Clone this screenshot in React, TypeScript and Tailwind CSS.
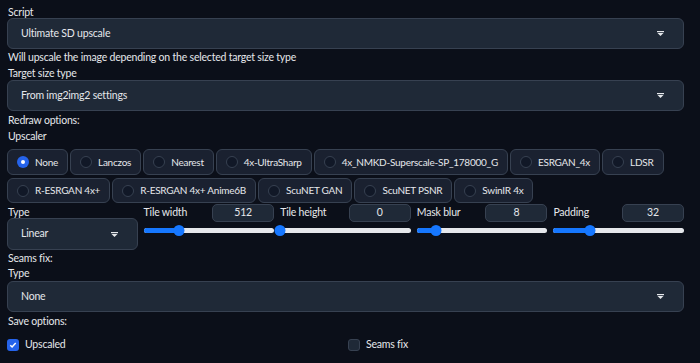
import React from 'react'

const Caret = () => (
  <svg width="7" height="5" viewBox="0 0 7 5" className="shrink-0">
    <path d="M0 0h7v1.2H0z" fill="#e5e7eb" />
    <path d="M0.5 2h6L3.5 5z" fill="#e5e7eb" />
  </svg>
)

function Dropdown({ value, className = 'h-[31px]' }: { value: string; className?: string }) {
  return (
    <div className={`flex items-center justify-between pl-[13px] pr-[19px] bg-[#1f2937] border border-[#374151] rounded-[6px] shrink-0 ${className}`}>
      <span>{value}</span>
      <Caret />
    </div>
  )
}

function Radio({ label, checked = false }: { label: string; checked?: boolean }) {
  return (
    <div className="h-full shrink-0 whitespace-nowrap flex items-center gap-[6px] pl-[9px] pr-[9px] bg-[#1a2130] border border-[#374151] rounded-[6px] text-[10px] tracking-[-0.25px]">
      {checked ? (
        <span className="w-[12px] h-[12px] rounded-full bg-[#2563eb] flex items-center justify-center">
          <span className="w-[4px] h-[4px] rounded-full bg-white" />
        </span>
      ) : (
        <span className="w-[12px] h-[12px] rounded-full bg-[#111827] border border-[#374151]" />
      )}
      <span>{label}</span>
    </div>
  )
}

function Slider({ label, value, pct }: { label: string; value: string; pct: number }) {
  return (
    <div className="flex flex-col">
      <div className="h-[18px] flex items-start justify-between">
        <span className="leading-[14px] pt-[1px]">{label}</span>
        <div className="w-[62px] h-[18px] flex items-center justify-center bg-[#1f2937] border border-[#374151] rounded-[5px]">{value}</div>
      </div>
      <div className="relative h-[16px] flex items-center">
        <div className="w-full h-[5px] rounded-full bg-[#e5e7eb] overflow-hidden">
          <div className="h-full bg-[#1677ff]" style={{ width: `${pct}%` }} />
        </div>
        <div className="absolute w-[11px] h-[11px] rounded-full bg-[#1677ff] -translate-x-1/2" style={{ left: `${pct}%` }} />
      </div>
    </div>
  )
}

const row1 = ['None', 'Lanczos', 'Nearest', '4x-UltraSharp', '4x_NMKD-Superscale-SP_178000_G', 'ESRGAN_4x', 'LDSR']
const row2 = ['R-ESRGAN 4x+', 'R-ESRGAN 4x+ Anime6B', 'ScuNET GAN', 'ScuNET PSNR', 'SwinIR 4x']

export default function App() {
  return (
    <div className="w-[700px] h-[363px] overflow-hidden bg-[#0b0f19] text-[#e5e7eb] text-[10.5px] tracking-[-0.2px] pl-[7px] pr-[16px] flex flex-col" style={{ fontFamily: 'Lato, "Liberation Sans", sans-serif' }}>
      <div className="h-[18px] leading-[14px] pt-[5px] pl-[1px] shrink-0">Script</div>
      <Dropdown value="Ultimate SD upscale" />
      <div className="h-[17px] leading-[17px] pl-[1px] shrink-0">Will upscale the image depending on the selected target size type</div>
      <div className="h-[14px] leading-[14px] pl-[1px] shrink-0">Target size type</div>
      <Dropdown value="From img2img2 settings" />
      <div className="h-[17px] leading-[18px] pl-[1px] shrink-0">Redraw options:</div>
      <div className="h-[21px] leading-[16px] pl-[1px] shrink-0">Upscaler</div>

      <div className="flex flex-col gap-[3px] shrink-0">
        <div className="h-[26px] flex gap-[2px]">
          {row1.map((r, i) => <Radio key={r} label={r} checked={i === 0} />)}
        </div>
        <div className="h-[25px] flex gap-[2px]">
          {row2.map(r => <Radio key={r} label={r} />)}
        </div>
      </div>

      <div className="grid grid-cols-5 gap-[6px] mt-[1px] h-[46px] shrink-0">
        <div className="flex flex-col">
          <div className="h-[14px] leading-[14px] pt-[1px] pl-[1px]">Type</div>
          <Dropdown value="Linear" className="h-[32px]" />
        </div>
        <Slider label="Tile width" value="512" pct={27} />
        <Slider label="Tile height" value="0" pct={0} />
        <Slider label="Mask blur" value="8" pct={15} />
        <Slider label="Padding" value="32" pct={28} />
      </div>

      <div className="h-[16px] leading-[16px] pl-[1px] shrink-0">Seams fix:</div>
      <div className="h-[15px] leading-[15px] pl-[1px] shrink-0">Type</div>
      <Dropdown value="None" />
      <div className="h-[18px] leading-[18px] pl-[1px] shrink-0">Save options:</div>

      <div className="flex h-[30px] items-center shrink-0">
        <div className="w-[341px] flex items-center gap-[6px]">
          <span className="w-[12px] h-[12px] rounded-[3px] bg-[#2563eb] flex items-center justify-center">
            <svg width="8" height="8" viewBox="0 0 8 8"><path d="M1.3 4.2l1.8 1.8 3.6-4" fill="none" stroke="#fff" strokeWidth="1.5" /></svg>
          </span>
          <span>Upscaled</span>
        </div>
        <div className="flex items-center gap-[6px]">
          <span className="w-[12px] h-[12px] rounded-[3px] bg-[#1f2937] border border-[#374151]" />
          <span>Seams fix</span>
        </div>
      </div>
    </div>
  )
}
